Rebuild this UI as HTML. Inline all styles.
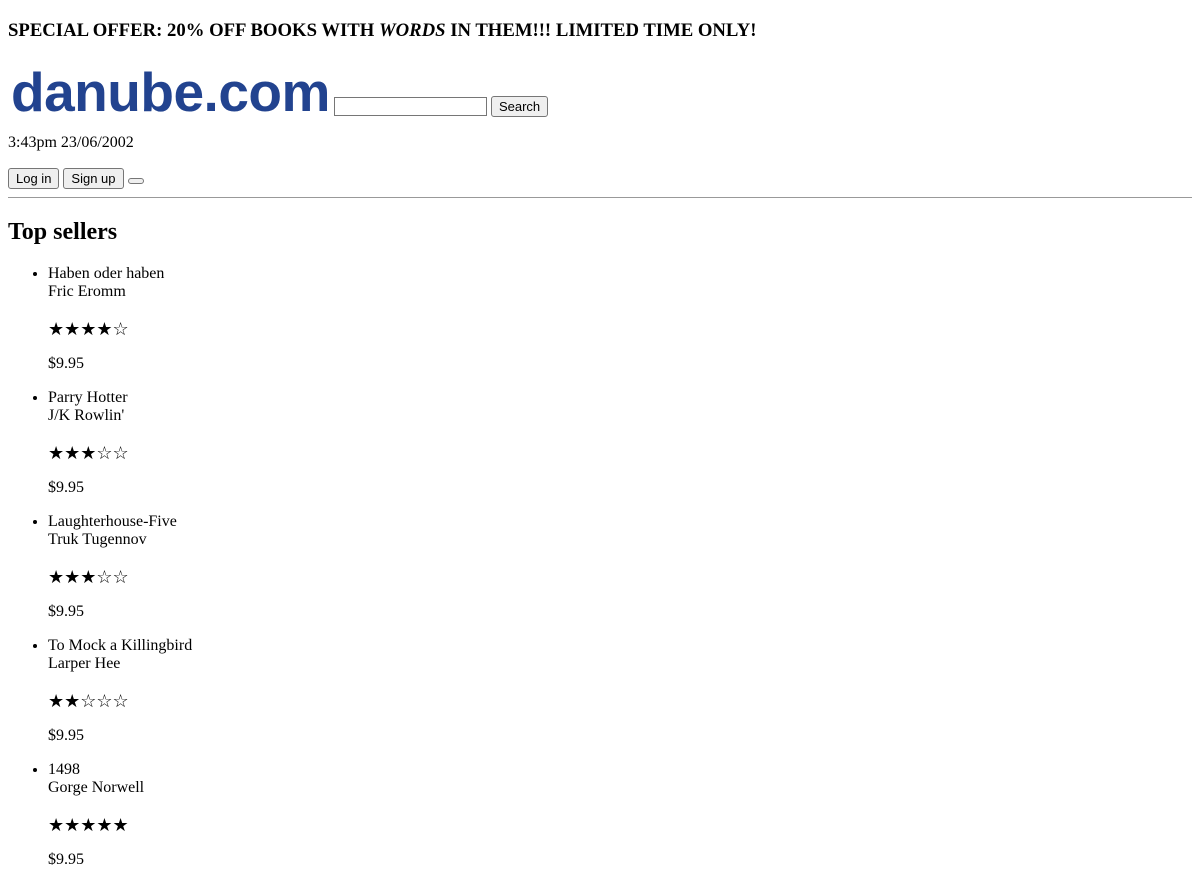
<!DOCTYPE html>
<html><head><meta charset="utf-8"><style>
body{margin:8px;font-family:"Liberation Serif",serif;font-size:16px;color:#000;background:#fff}
h3{font-size:18.72px;margin:19.5px 0 18.72px}
.top{padding-top:4px}
.logo{display:inline-block;font-family:"Liberation Sans",sans-serif;font-weight:bold;color:#22438f;font-size:55px;letter-spacing:-0.5px;line-height:56px;height:56px;vertical-align:baseline;margin-left:3px}
input{font-family:"Liberation Sans",sans-serif;font-size:13px;width:147px;height:15px;border:1px solid #767676;padding:1px 2px;vertical-align:baseline}
button{font-family:"Liberation Sans",sans-serif;font-size:13px;padding:1px 7px;border:1px solid #767676;border-radius:3px;background:#efefef;height:21px}
.e{width:16px;height:6px;padding:0;vertical-align:baseline}
hr{border:0;border-top:1px solid #999;margin:8px 0}
h2{font-size:24px;margin:21px 0 19px}
ul{padding-left:40px;margin:16px 0}
p{margin:16px 0}
.date{margin-top:14px}
.sp{height:22px;line-height:22px;overflow:visible}
.s{display:inline-block;font-size:18px;line-height:22px;vertical-align:top;position:relative;top:1px}
</style></head><body>
<h3>SPECIAL OFFER: 20% OFF BOOKS WITH <i>WORDS</i> IN THEM!!! LIMITED TIME ONLY!</h3>
<div class="top"><span class="logo">danube.com</span> <input type="text"> <button>Search</button></div>
<p class="date">3:43pm 23/06/2002</p>
<div><button>Log in</button> <button>Sign up</button> <button class="e"></button></div>
<hr>
<h2>Top sellers</h2>
<ul>
<li>Haben oder haben<br>Fric Eromm<p class="sp"><span class="s">★★★★☆</span></p><p>$9.95</p></li>
<li>Parry Hotter<br>J/K Rowlin'<p class="sp"><span class="s">★★★☆☆</span></p><p>$9.95</p></li>
<li>Laughterhouse-Five<br>Truk Tugennov<p class="sp"><span class="s">★★★☆☆</span></p><p>$9.95</p></li>
<li>To Mock a Killingbird<br>Larper Hee<p class="sp"><span class="s">★★☆☆☆</span></p><p>$9.95</p></li>
<li>1498<br>Gorge Norwell<p class="sp"><span class="s">★★★★★</span></p><p>$9.95</p></li>
</ul>
</body></html>
